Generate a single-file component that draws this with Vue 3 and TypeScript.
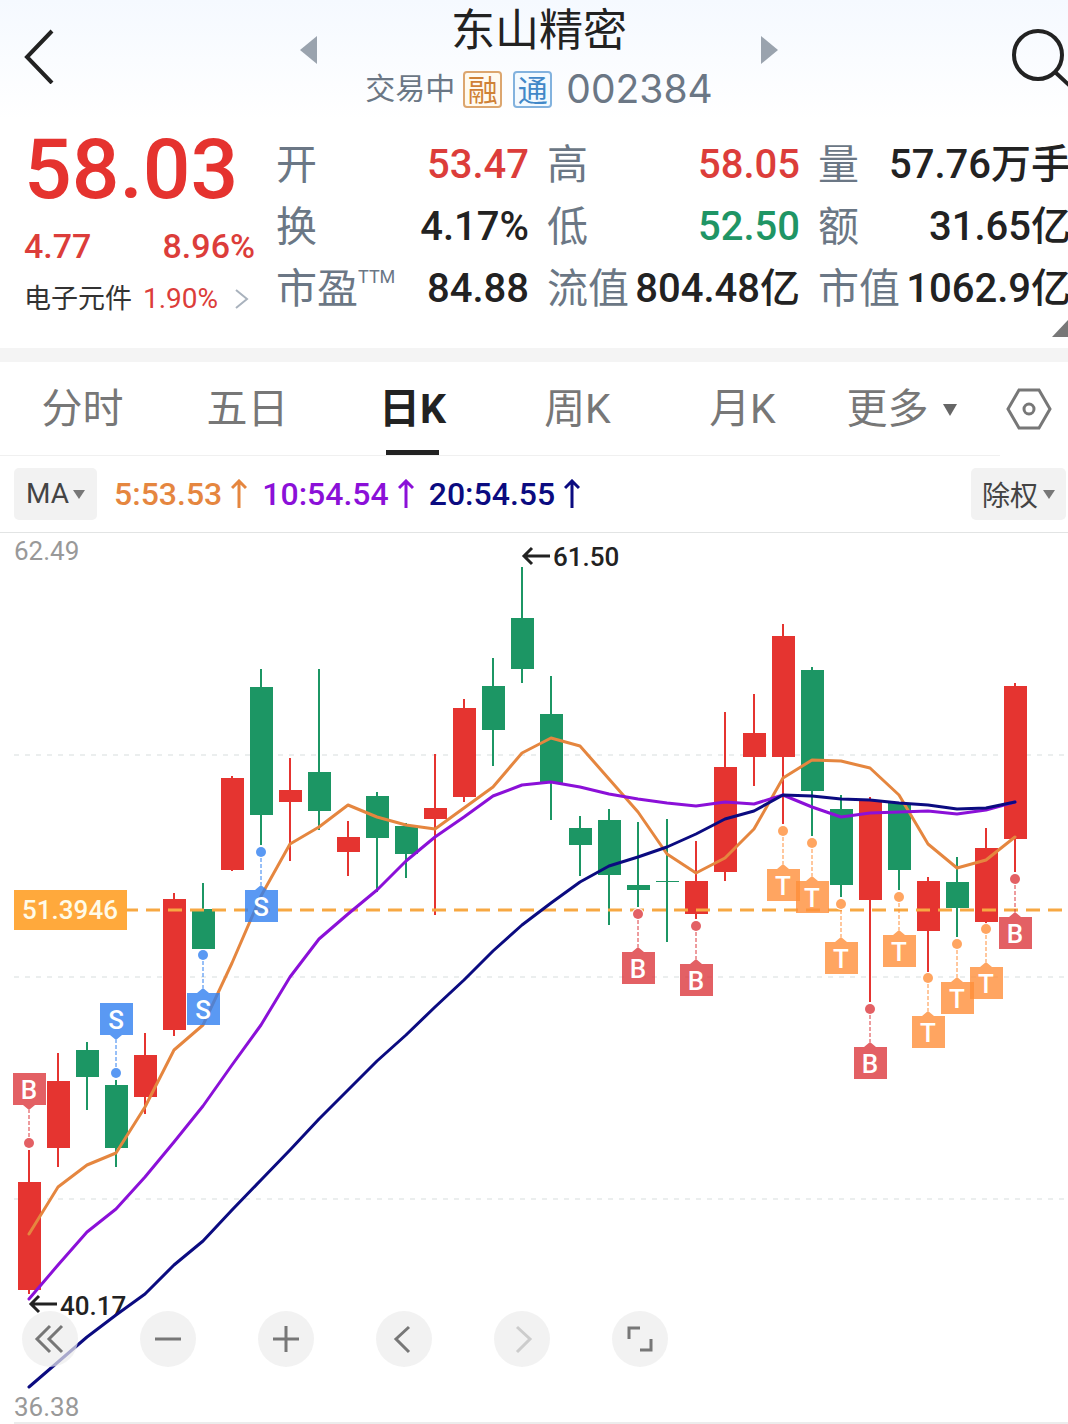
<script setup lang="ts">
import { ref } from 'vue'

type Tone = 'up' | 'down' | 'plain'
interface Stat { label: string; sup?: string; value: string; tone: Tone }
type Candle = [kind: 'r' | 'g', top: number, bottom: number, high: number, low: number]
interface Marker { kind: 'B' | 'S' | 'T'; index: number; dot: number; above?: boolean }

const stats: Stat[] = [
  { label: '开', value: '53.47', tone: 'up' },
  { label: '高', value: '58.05', tone: 'up' },
  { label: '量', value: '57.76万手', tone: 'plain' },
  { label: '换', value: '4.17%', tone: 'plain' },
  { label: '低', value: '52.50', tone: 'down' },
  { label: '额', value: '31.65亿', tone: 'plain' },
  { label: '市盈', sup: 'TTM', value: '84.88', tone: 'plain' },
  { label: '流值', value: '804.48亿', tone: 'plain' },
  { label: '市值', value: '1062.9亿', tone: 'plain' },
]

const tabs = ['分时', '五日', '日K', '周K', '月K']
const activeTab = ref('日K')

const averages = [
  { text: '5:53.53', cls: 'ma5' },
  { text: '10:54.54', cls: 'ma10' },
  { text: '20:54.55', cls: 'ma20' },
]

const candles: Candle[] = [
  ['r', 1182, 1290, 1150, 1294], ['r', 1081, 1148, 1053, 1167], ['g', 1050, 1077, 1042, 1110],
  ['g', 1085, 1148, 1080, 1167], ['r', 1055, 1097, 1033, 1114], ['r', 899, 1030, 893, 1036],
  ['g', 909, 949, 883, 949], ['r', 778, 870, 776, 871], ['g', 687, 815, 669, 845],
  ['r', 790, 802, 758, 861], ['g', 772, 811, 669, 830], ['r', 837, 852, 821, 876],
  ['g', 796, 838, 792, 892], ['g', 826, 854, 823, 878], ['r', 808, 819, 754, 915],
  ['r', 708, 797, 699, 802], ['g', 686, 730, 658, 766], ['g', 618, 669, 567, 683],
  ['g', 714, 783, 676, 820], ['g', 828, 845, 816, 876], ['g', 820, 875, 809, 925],
  ['g', 885, 890, 822, 907], ['g', 881, 882, 819, 942], ['r', 881, 914, 841, 919],
  ['r', 767, 872, 712, 881], ['r', 733, 757, 694, 786], ['r', 636, 757, 624, 824],
  ['g', 670, 791, 667, 836], ['g', 809, 885, 795, 897], ['r', 801, 900, 797, 1002],
  ['g', 803, 870, 802, 890], ['r', 881, 931, 877, 972], ['g', 882, 908, 857, 937],
  ['r', 848, 922, 828, 925], ['r', 686, 839, 683, 872],
]

const ma5 = [1234, 1187, 1165, 1153, 1107, 1050, 1025, 963, 896, 844, 827, 805, 817, 825, 829, 808, 787, 753, 738, 746, 779, 812, 854, 873, 858, 829, 778, 760, 761, 768, 795, 844, 868, 860, 837]
const ma10 = [1299, 1265, 1232, 1209, 1177, 1142, 1106, 1065, 1025, 977, 939, 914, 890, 861, 837, 817, 796, 785, 782, 787, 794, 799, 803, 806, 802, 804, 795, 807, 817, 813, 812, 811, 814, 810, 802]
const ma20 = [1387, 1362, 1337, 1315, 1294, 1265, 1241, 1210, 1180, 1150, 1119, 1090, 1061, 1035, 1007, 980, 951, 925, 903, 882, 866, 857, 847, 834, 819, 811, 795, 796, 799, 800, 803, 805, 809, 808, 802]

const markers: Marker[] = [
  { kind: 'B', index: 0, dot: 1143, above: true },
  { kind: 'S', index: 3, dot: 1073, above: true },
  { kind: 'S', index: 6, dot: 955 },
  { kind: 'S', index: 8, dot: 852 },
  { kind: 'B', index: 21, dot: 914 },
  { kind: 'B', index: 23, dot: 926 },
  { kind: 'T', index: 26, dot: 831 },
  { kind: 'T', index: 27, dot: 843 },
  { kind: 'T', index: 28, dot: 904 },
  { kind: 'B', index: 29, dot: 1009 },
  { kind: 'T', index: 30, dot: 897 },
  { kind: 'T', index: 31, dot: 978 },
  { kind: 'T', index: 32, dot: 944 },
  { kind: 'T', index: 33, dot: 929 },
  { kind: 'B', index: 34, dot: 879 },
]

const xOf = (i: number) => 29 + i * 29
const pathOf = (ys: number[]) => ys.map((y, i) => `${xOf(i)},${y}`).join(' ')
const flagPath = (above?: boolean) =>
  above
    ? 'M-16 -70H17V-38H6L0 -33L-6 -38H-16Z'
    : 'M-16 38H-6L0 33L6 38H17V70H-16Z'

const tools = [
  { name: '最早', d: 'M28 15L15 28L28 41M40 15L27 28L40 41' },
  { name: '缩小', d: 'M15 28H41' },
  { name: '放大', d: 'M15 28H41M28 15V41' },
  { name: '向前', d: 'M33 16L20 28L33 41' },
  { name: '向后', d: 'M23 16L36 28L23 41', off: true },
  { name: '全屏', d: 'M17 28V17H28M39 28V39H28' },
]
</script>

<template>
  <main class="page">
    <header class="top">
      <button class="icon-btn back" aria-label="返回">
        <svg width="32" height="56" viewBox="0 0 32 56"><path d="M30 3L5 29L30 55" fill="none" stroke="#222" stroke-width="4" /></svg>
      </button>
      <div class="heading">
        <button class="icon-btn step" aria-label="上一只"><svg width="18" height="28" viewBox="0 0 18 28"><path d="M18 0V28L1 14Z" fill="#9aa3ae" /></svg></button>
        <div class="name">
          <h1>东山精密</h1>
          <p class="status">
            <span>交易中</span>
            <span class="badge rong">融</span>
            <span class="badge tong">通</span>
            <span class="code">002384</span>
          </p>
        </div>
        <button class="icon-btn step" aria-label="下一只"><svg width="18" height="28" viewBox="0 0 18 28"><path d="M0 0V28L17 14Z" fill="#9aa3ae" /></svg></button>
      </div>
      <button class="icon-btn search" aria-label="搜索">
        <svg width="60" height="60" viewBox="0 0 60 60"><g fill="none" stroke="#222" stroke-width="4"><circle cx="30" cy="28" r="24" /><path d="M47 45L62 59" /></g></svg>
      </button>
    </header>

    <section class="quote">
      <div class="price">
        <strong class="last">58.03</strong>
        <div class="change"><span>4.77</span><span>8.96%</span></div>
        <a class="sector" href="#sector">
          <span>电子元件</span><span class="pct">1.90%</span>
          <svg width="14" height="20" viewBox="0 0 14 20"><path d="M1 1L12 10L1 19" fill="none" stroke="#a9b2bd" stroke-width="2" /></svg>
        </a>
      </div>
      <dl class="stats">
        <div v-for="s in stats" :key="s.label" class="stat">
          <dt>{{ s.label }}<sup v-if="s.sup">{{ s.sup }}</sup></dt>
          <dd :class="s.tone">{{ s.value }}</dd>
        </div>
      </dl>
      <svg class="corner" width="16" height="17" viewBox="0 0 16 17"><path d="M16 0V17H0Z" fill="#777" /></svg>
    </section>

    <nav class="periods">
      <div class="tabs">
        <button v-for="t in tabs" :key="t" :class="{ active: t === activeTab }" @click="activeTab = t">{{ t }}</button>
        <button class="more">更多<svg width="14" height="12" viewBox="0 0 14 12"><path d="M0 0H14L7 12Z" fill="#666" /></svg></button>
      </div>
      <button class="icon-btn settings" aria-label="设置">
        <svg width="46" height="42" viewBox="0 0 46 42"><g fill="none" stroke="#777" stroke-width="3"><path d="M13 2H33L44 21L33 40H13L2 21Z" /><circle cx="23" cy="21" r="5" /></g></svg>
      </button>
    </nav>

    <div class="indicators">
      <label class="picker ma">
        <select aria-label="指标"><option>MA</option></select>
        <svg width="12" height="9" viewBox="0 0 12 9"><path d="M0 0H12L6 9Z" fill="#777" /></svg>
      </label>
      <ul class="legend">
        <li v-for="a in averages" :key="a.cls" :class="a.cls">
          {{ a.text }}<svg width="16" height="30" viewBox="0 0 16 30"><path d="M8 29V2M1 9L8 2L15 9" fill="none" stroke="currentColor" stroke-width="3" /></svg>
        </li>
      </ul>
      <label class="picker adjust">
        <select aria-label="复权"><option>除权</option></select>
        <svg width="12" height="9" viewBox="0 0 12 9"><path d="M0 0H12L6 9Z" fill="#777" /></svg>
      </label>
    </div>

    <section class="chart">
      <svg class="plot" viewBox="0 533 1068 891" role="img" aria-label="日K线图">
        <g class="grid">
          <path d="M14 755H1068M14 977H1068M14 1199H1068" />
        </g>
        <path d="M14 1423H1068" stroke="#ececec" stroke-width="2" />
        <text class="axis" x="14" y="560">62.49</text>
        <text class="axis" x="14" y="1416">36.38</text>

        <g v-for="(c, i) in candles" :key="i" :class="c[0]">
          <rect :x="xOf(i) - 1" :y="c[3]" width="2" :height="c[4] - c[3]" />
          <rect :x="xOf(i) - 11" :y="c[1]" width="23" :height="c[2] - c[1]" />
        </g>

        <path d="M124 910H1062" class="cost-line" />
        <rect x="14" y="890" width="113" height="40" fill="#ffa93c" />
        <text class="cost" x="70" y="919">51.3946</text>

        <g class="note">
          <path d="M550 556H524M532 548L524 556L532 564" />
          <text x="553" y="566">61.50</text>
          <path d="M57 1304H31M39 1296L31 1304L39 1312" />
          <text x="60" y="1315">40.17</text>
        </g>

        <g class="lines">
          <polyline :points="pathOf(ma5)" stroke="#e5863f" />
          <polyline :points="pathOf(ma10)" stroke="#8b10d8" />
          <polyline :points="pathOf(ma20)" stroke="#0b0b80" />
        </g>

        <g v-for="m in markers" :key="m.index" :class="['marker', 'm' + m.kind]" :transform="`translate(${xOf(m.index)} ${m.dot})`">
          <path class="stem" :d="m.above ? 'M0 -6V-33' : 'M0 6V33'" />
          <circle r="6" fill="#fff" />
          <circle r="5" class="dot" />
          <path class="flag" :d="flagPath(m.above)" />
          <text x="0" :y="m.above ? -44 : 64">{{ m.kind }}</text>
        </g>
      </svg>

      <div class="tools">
        <button v-for="t in tools" :key="t.name" :aria-label="t.name" :disabled="t.off">
          <svg width="56" height="56" viewBox="0 0 56 56"><path :d="t.d" /></svg>
        </button>
      </div>
    </section>
  </main>
</template>

<style>
body { margin: 0; background: #fff; }
</style>

<style scoped>
.page {
  overflow: hidden;
  background: #fff;
  color: #222;
  font-family: Roboto, "Noto Sans CJK SC", sans-serif;
}
button, select { margin: 0; padding: 0; border: 0; background: none; color: inherit; font: inherit; cursor: pointer; }
svg { display: block; flex: none; }
h1, p, dl, dd, ul { margin: 0; padding: 0; }

.top { display: flex; height: 120px; background: linear-gradient(#f5f9ff, #fff); }
.icon-btn { display: flex; flex: none; }
.back { width: 90px; padding: 28px 0 0 22px; }
.search { width: 80px; padding: 27px 0 0 20px; }
.heading { flex: 1; display: flex; justify-content: center; gap: 48px; }
.step { padding-top: 36px; }
.name { display: flex; flex-direction: column; align-items: center; }
.name h1 { font-size: 44px; font-weight: 400; line-height: 62px; }
.status { display: flex; align-items: center; height: 54px; font-size: 30px; line-height: 40px; color: #6b7785; }
.badge { box-sizing: border-box; width: 39px; height: 37px; margin-left: 8px; border: 2px solid; border-radius: 4px; line-height: 35px; text-align: center; }
.badge + .badge { margin-left: 11px; }
.rong { color: #cf8136; border-color: #dca66f; background: #fffaf0; }
.tong { color: #4288c8; border-color: #82b2de; background: #f3faff; }
.code { margin-left: 14px; font-family: Inter, sans-serif; font-size: 39px; }

.quote { position: relative; display: flex; height: 228px; border-bottom: 14px solid #f4f4f4; }
.price { flex: none; box-sizing: border-box; width: 276px; padding: 0 21px 0 24px; color: #e5332f; }
.last { display: block; font-size: 84px; font-weight: 500; line-height: 100px; }
.change { display: flex; justify-content: space-between; font-size: 34px; font-weight: 500; line-height: 52px; color: #dc3d3a; }
.sector { display: flex; align-items: center; font-size: 27px; line-height: 54px; color: #333; text-decoration: none; }
.pct { margin: 0 17px 0 11px; font-size: 28px; color: #dc3d3a; }
.stats { flex: 1; display: grid; grid-template-columns: repeat(3, 1fr); column-gap: 18px; align-content: start; margin: 15px -3px 0 0; }
.stat { display: flex; justify-content: space-between; height: 62px; font-size: 41px; line-height: 60px; white-space: nowrap; }
.stat dt { display: flex; color: #6b7785; }
.stat sup { font-size: 18px; line-height: 36px; }
.stat dd { font-size: 40px; font-weight: 500; }
.up { color: #dc3d3a; }
.down { color: #1f9565; }
.corner { position: absolute; right: 0; bottom: 11px; }

.periods { display: flex; height: 94px; }
.tabs { flex: 1; display: grid; grid-template-columns: repeat(5, 33fr) 35fr; border-bottom: 1px solid #f0f0f0; }
.tabs button { position: relative; padding-top: 2px; font-size: 41px; line-height: 91px; color: #777; }
.tabs .active { color: #222; font-weight: 700; }
.tabs .active::after { content: ""; position: absolute; left: 50%; bottom: 0; width: 53px; height: 5px; margin-left: -27px; background: #222; }
.tabs .more { display: flex; align-items: center; justify-content: center; gap: 14px; padding-right: 22px; }
.settings { align-items: center; justify-content: center; width: 68px; padding-right: 10px; }

.indicators { display: flex; align-items: center; height: 76px; padding: 0 2px 0 14px; border-bottom: 1px solid #e2e4e4; }
.picker { display: flex; align-items: center; justify-content: center; gap: 4px; height: 52px; border-radius: 5px; background: #f2f2f2; color: #444; font-size: 28px; }
.picker select { appearance: none; line-height: 40px; }
.ma { width: 83px; }
.adjust { width: 95px; font-family: "Noto Sans CJK SC", sans-serif; }
.legend { flex: 1; display: flex; gap: 15px; margin-left: 17px; list-style: none; font-size: 32px; font-weight: 500; line-height: 40px; }
.legend li { display: flex; align-items: center; gap: 9px; }
.ma5 { color: #e5863f; }
.ma10 { color: #8b10d8; }
.ma20 { color: #0b0b80; }

.chart { position: relative; }
.plot { width: 100%; height: auto; }
.grid path { stroke: #ebeeee; stroke-width: 2; stroke-dasharray: 5 6; }
.axis { font-size: 26px; fill: #999; }
.r { fill: #e53430; }
.g { fill: #1c9664; }
.cost-line { stroke: #f7a842; stroke-width: 3; stroke-dasharray: 14 8; }
.cost { font-size: 26px; font-weight: 500; fill: #fffbe8; text-anchor: middle; }
.note path { fill: none; stroke: #222; stroke-width: 3; }
.note text { font-size: 26px; font-weight: 500; fill: #222; }
.lines polyline { fill: none; stroke-width: 3; stroke-linejoin: round; stroke-linecap: round; }
.mB { color: #dc383d; }
.mS { color: #3180f0; }
.mT { color: #ff8f3a; }
.stem { stroke: currentColor; stroke-dasharray: 4 2; }
.dot, .flag { fill: currentColor; fill-opacity: 0.8; }
.marker text { font-size: 26px; font-weight: 500; fill: #fff; text-anchor: middle; }

.tools { position: absolute; left: 22px; bottom: 57px; display: flex; gap: 62px; }
.tools button { border-radius: 50%; background: rgba(236, 236, 236, 0.7); }
.tools path { fill: none; stroke: #777; stroke-width: 3; }
.tools :disabled path { stroke: #ccc; }
</style>
